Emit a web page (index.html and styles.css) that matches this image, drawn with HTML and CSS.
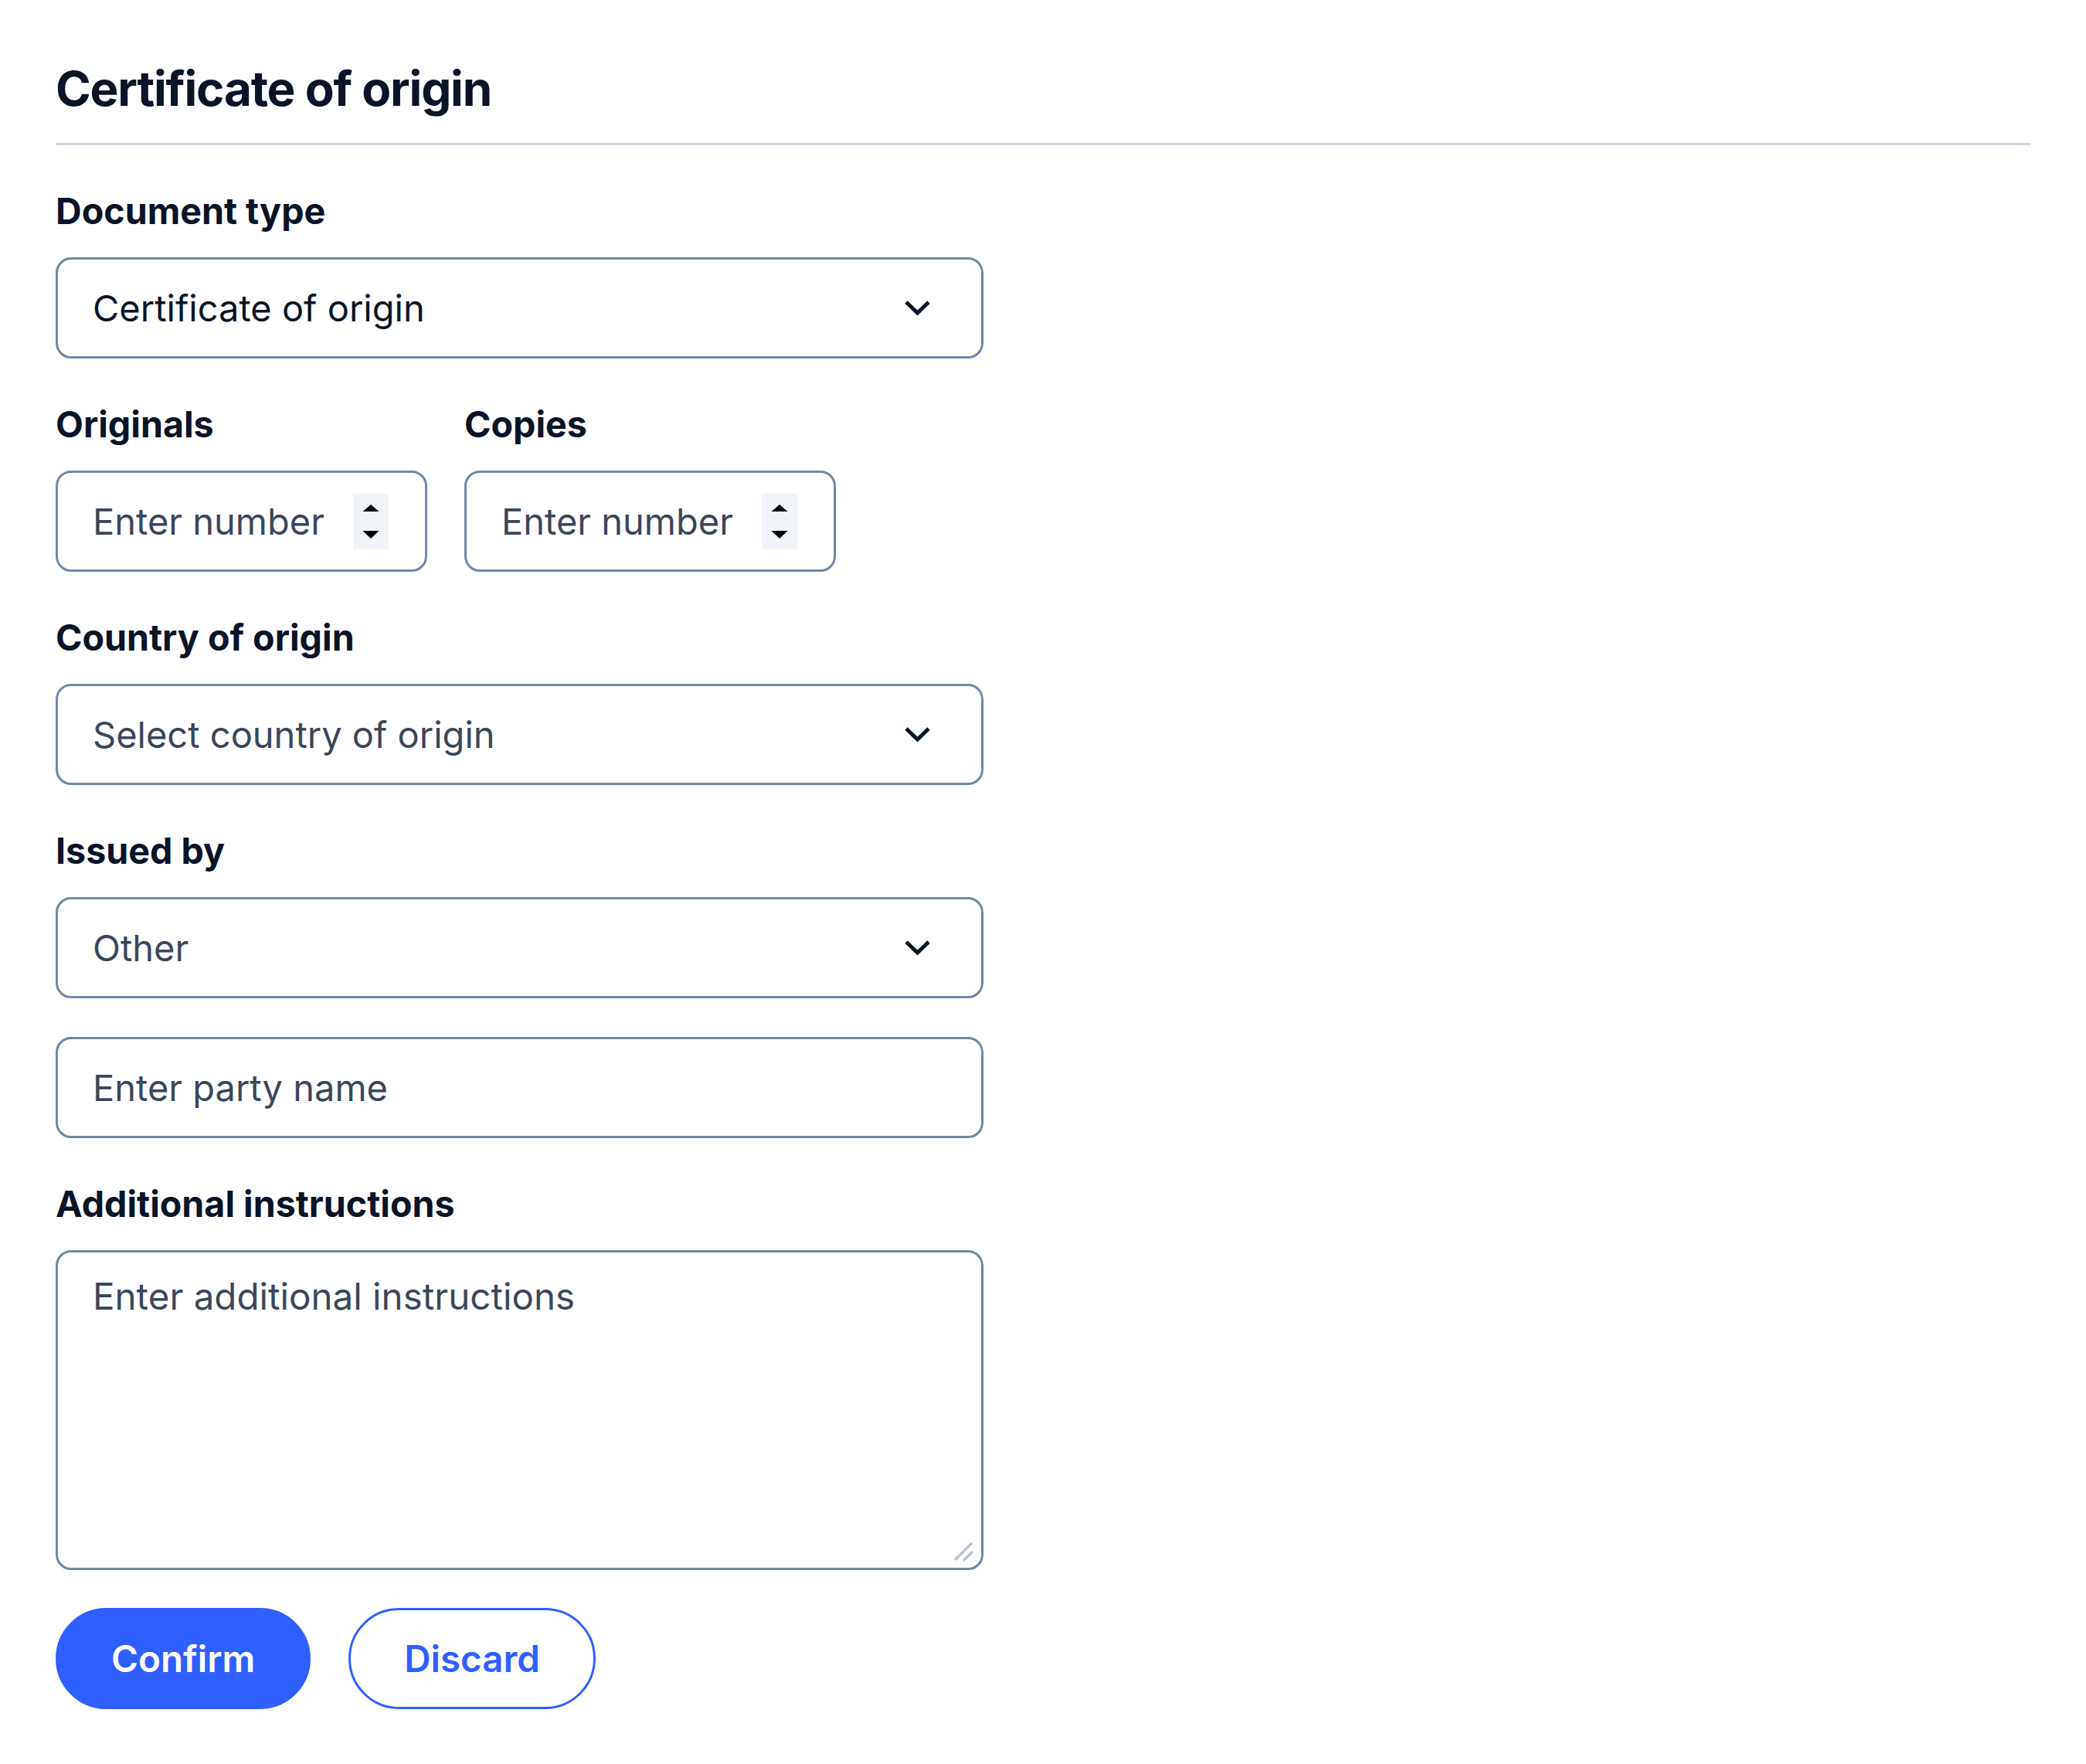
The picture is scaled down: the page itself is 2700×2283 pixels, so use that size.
FILE: index.html
```html
<!DOCTYPE html>
<html lang="en">
<head>
<meta charset="utf-8">
<title>Certificate of origin</title>
<link rel="stylesheet" href="styles.css">
</head>
<body>
<main class="page">
  <h1 class="title">Certificate of origin</h1>
  <hr class="divider">
  <form class="form">
    <div class="fields">
      <div class="field">
        <label class="label" for="doc-type">Document type</label>
        <div class="control control--wide">
          <select id="doc-type" class="select">
            <option>Certificate of origin</option>
          </select>
          <svg class="chevron" viewBox="0 0 35 21" aria-hidden="true"><path d="M3 3 L17.5 17 L32 3" fill="none" stroke="currentColor" stroke-width="5"/></svg>
        </div>
      </div>

      <div class="row">
        <div class="field">
          <label class="label" for="originals">Originals</label>
          <div class="control control--number">
            <input id="originals" class="input" type="number" placeholder="Enter number">
            <span class="spinner" aria-hidden="true">
              <svg viewBox="0 0 46 72"><path d="M12.5 23 L23 14 L33.5 23 Z" fill="#000"/><path d="M12.5 48 L33.5 48 L23 58 Z" fill="#000"/></svg>
            </span>
          </div>
        </div>
        <div class="field">
          <label class="label" for="copies">Copies</label>
          <div class="control control--number">
            <input id="copies" class="input" type="number" placeholder="Enter number">
            <span class="spinner" aria-hidden="true">
              <svg viewBox="0 0 46 72"><path d="M12.5 23 L23 14 L33.5 23 Z" fill="#000"/><path d="M12.5 48 L33.5 48 L23 58 Z" fill="#000"/></svg>
            </span>
          </div>
        </div>
      </div>

      <div class="field">
        <label class="label" for="country">Country of origin</label>
        <div class="control control--wide">
          <select id="country" class="select select--placeholder">
            <option>Select country of origin</option>
          </select>
          <svg class="chevron" viewBox="0 0 35 21" aria-hidden="true"><path d="M3 3 L17.5 17 L32 3" fill="none" stroke="currentColor" stroke-width="5"/></svg>
        </div>
      </div>

      <div class="field">
        <label class="label" for="issuer">Issued by</label>
        <div class="control control--wide">
          <select id="issuer" class="select select--placeholder">
            <option>Other</option>
          </select>
          <svg class="chevron" viewBox="0 0 35 21" aria-hidden="true"><path d="M3 3 L17.5 17 L32 3" fill="none" stroke="currentColor" stroke-width="5"/></svg>
        </div>
        <div class="control control--wide control--spaced">
          <input class="input" type="text" placeholder="Enter party name" aria-label="Party name">
        </div>
      </div>

      <div class="field">
        <label class="label" for="instructions">Additional instructions</label>
        <div class="textarea-wrap">
          <textarea id="instructions" class="textarea" placeholder="Enter additional instructions"></textarea>
          <svg class="grip" viewBox="0 0 26 26" aria-hidden="true"><path d="M3 23 L23 3 M14 24 L24 14" stroke="#b9c5d4" stroke-width="3.5" stroke-linecap="round"/></svg>
        </div>
      </div>
    </div>

    <div class="actions">
      <button type="button" class="btn btn--primary">Confirm</button>
      <button type="button" class="btn btn--outline">Discard</button>
    </div>
  </form>
</main>
</body>
</html>
```

FILE: styles.css
```css
html, body {
  margin: 0;
  padding: 0;
  background: #ffffff;
}

body {
  font-family: Inter, "Noto Sans", "Liberation Sans", sans-serif;
  color: #0a1426;
}

.page {
  padding: 78px 72px 40px 72px;
}

.title {
  margin: 0;
  font-size: 62px;
  line-height: 1.2;
  font-weight: 700;
  letter-spacing: -0.02em;
  color: #0a1426;
}

.divider {
  border: 0;
  height: 3px;
  background: #cdd5e0;
  margin: 33px 0 58px;
}

.form {
  display: flex;
  flex-direction: column;
  gap: 49px;
}

.fields {
  display: flex;
  flex-direction: column;
  gap: 58px;
}

.field {
  display: flex;
  flex-direction: column;
}

.row {
  display: flex;
  gap: 48px;
}

.label {
  font-size: 46.6px;
  font-weight: 700;
  line-height: 54px;
  margin-bottom: 33px;
  color: #0a1426;
}

.control {
  box-sizing: border-box;
  height: 131px;
  border: 3px solid #7088a5;
  border-radius: 20px;
  display: flex;
  align-items: center;
  padding-left: 45px;
  background: #fff;
}

.control--wide {
  width: 1201px;
}

.control--number {
  width: 481px;
}

.control--spaced {
  margin-top: 50px;
}

.select,
.input {
  flex: 1;
  min-width: 0;
  height: 100%;
  border: 0;
  outline: 0;
  padding: 0;
  margin: 0;
  background: transparent;
  font-family: inherit;
  font-size: 47px;
  color: #0a1426;
}

.select {
  -webkit-appearance: none;
  appearance: none;
  cursor: pointer;
}

.select--placeholder {
  color: #3b475a;
}

.input::placeholder,
.textarea::placeholder {
  color: #3b475a;
  opacity: 1;
}

.input[type="number"] {
  -moz-appearance: textfield;
}

.input::-webkit-inner-spin-button,
.input::-webkit-outer-spin-button {
  -webkit-appearance: none;
  margin: 0;
}

.chevron {
  width: 35px;
  height: 21px;
  margin: 0 65px 0 20px;
  color: #0a1426;
  flex: none;
}

.spinner {
  flex: none;
  width: 46px;
  height: 72px;
  margin: 0 47px 0 10px;
  background: #f1f4f8;
  display: block;
}

.spinner svg {
  display: block;
  width: 46px;
  height: 72px;
}

.textarea-wrap {
  position: relative;
  width: 1201px;
}

.textarea {
  display: block;
  box-sizing: border-box;
  width: 1201px;
  height: 414px;
  border: 3px solid #7088a5;
  border-radius: 20px;
  padding: 24px 45px;
  font-family: inherit;
  font-size: 47.5px;
  line-height: 1.4;
  color: #0a1426;
  resize: none;
  outline: 0;
  margin: 0;
}

.grip {
  position: absolute;
  right: 13px;
  bottom: 11px;
  width: 26px;
  height: 26px;
  pointer-events: none;
}

.actions {
  display: flex;
  gap: 49px;
}

.btn {
  box-sizing: border-box;
  height: 131px;
  padding: 0 69px;
  border-radius: 999px;
  border: 3px solid #2e60ff;
  font-family: inherit;
  font-size: 47.5px;
  font-weight: 600;
  cursor: pointer;
}

.btn--primary {
  background: #2e60ff;
  color: #ffffff;
}

.btn--outline {
  background: #ffffff;
  color: #2e60ff;
}
```
